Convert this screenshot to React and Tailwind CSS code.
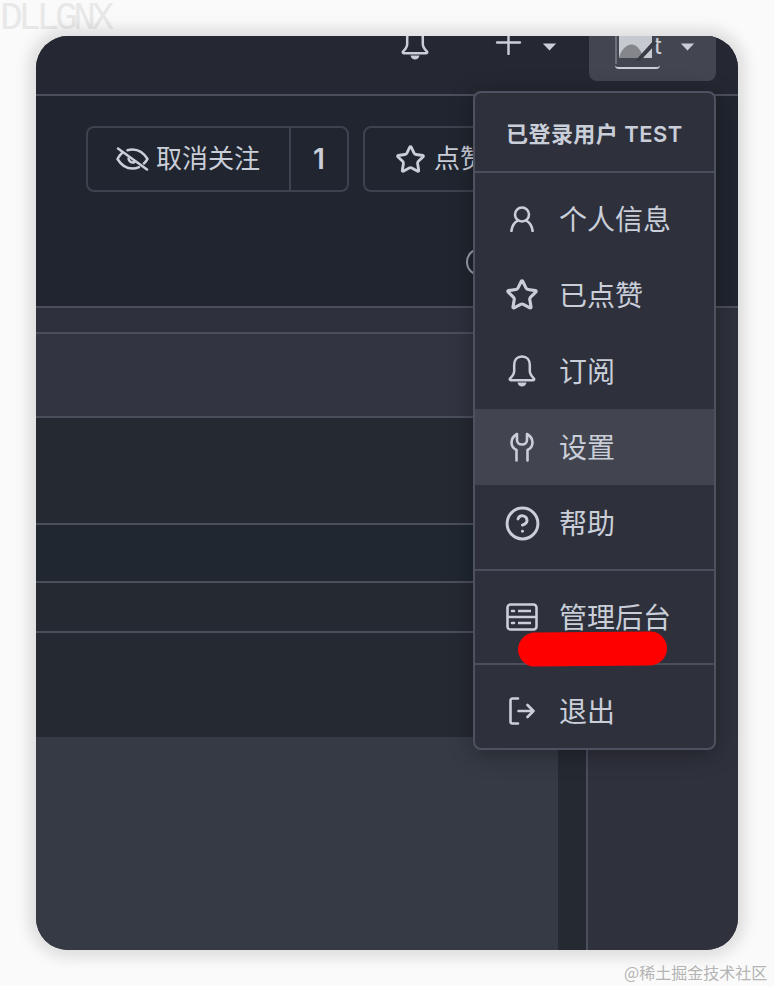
import React from "react";
import { Plus, Star, CircleHelp } from "lucide-react";

const Caret = ({ className }) => (
  <svg viewBox="0 0 16 9" className={className} fill="currentColor">
    <path d="M0.5 0.5h15L8 8.5z" />
  </svg>
);

const BellIcon = ({ className }) => (
  <svg viewBox="0 0 28 32" className={className} fill="none" stroke="currentColor" strokeWidth="2.5">
    <path
      d="M14 1.500C9 1.500 6.200 5 6.200 10v6c0 3-1.600 5-4 7.400-.8.8-.4 1.800.6 1.800h22.400c1 0 1.400-1 .6-1.800-2.400-2.400-4-4.400-4-7.400v-6c0-5-2.800-8.500-7.800-8.500z"
      strokeLinejoin="round"
    />
    <path d="M9.500 27.500h9c-.5 2.500-2.300 4-4.500 4s-4-1.500-4.500-4z" fill="currentColor" stroke="none" />
  </svg>
);

const UserIcon = ({ className }) => (
  <svg viewBox="0 0 24 26" className={className} fill="none" stroke="currentColor" strokeWidth="2.600" strokeLinecap="round">
    <circle cx="12" cy="8.500" r="7" />
    <path d="M1.400 25c.6-5 3-8.500 6.300-10.300M22.600 25c-.6-5-3-8.500-6.300-10.300" />
  </svg>
);

const WrenchIcon = ({ className }) => (
  <svg viewBox="0 0 24 30" className={className} fill="none" stroke="currentColor" strokeWidth="2.600" strokeLinecap="round" strokeLinejoin="round">
    <path d="M6.500 28.500V18C3.500 16.500 1.500 13.500 1.500 10.500c0-3.500 2-6.500 5.500-8.500v6c0 2.500 2 4.500 5 4.500s5-2 5-4.500V2c3.500 2 5.500 5 5.500 8.500 0 3-2 6-5 7.500v10.500" />
  </svg>
);

const ServerIcon = ({ className }) => (
  <svg viewBox="0 0 32 28" className={className} fill="none" stroke="currentColor" strokeWidth="2.600">
    <rect x="1.500" y="1.500" width="29" height="25" rx="3" />
    <path d="M1.500 14h29M12 8h13M12 20h13" />
    <path d="M6 8h2M6 20h2" strokeLinecap="round" />
  </svg>
);

const LogoutIcon = ({ className }) => (
  <svg viewBox="0 0 26 28" className={className} fill="none" stroke="currentColor" strokeWidth="2.600" strokeLinecap="round" strokeLinejoin="round">
    <path d="M9 1.500H3.500a2 2 0 0 0-2 2v21a2 2 0 0 0 2 2H9" />
    <path d="M9.500 14h15M18.500 8l6 6-6 6" />
  </svg>
);

const EyeSlash = ({ className }) => (
  <svg viewBox="0 0 33 24" className={className} fill="none" stroke="currentColor" strokeWidth="2.500" strokeLinecap="round" strokeLinejoin="round">
    <path d="M2 1.500l29 21" />
    <path d="M11.500 3.200C13 2.700 14.700 2.400 16.500 2.400c6.500 0 11.500 3.800 15 9.600-1 1.700-2.200 3.200-3.600 4.500" />
    <path d="M5.800 6.200C4 7.700 2.700 9.700 1.500 12c3.500 5.800 8.500 9.600 15 9.600 2.400 0 4.500-.5 6.500-1.400" />
    <path d="M12.500 11.500a4.200 4.200 0 0 0 6 3.500" />
  </svg>
);

const StarIcon = ({ className }) => <Star className={className} strokeWidth={2.2} />;
const HelpIcon = ({ className }) => <CircleHelp className={className} strokeWidth={1.9} />;

const Item = ({ icon: Icon, label, active, iconClass }) => (
  <div className={`h-[76px] flex items-center pl-[31px] ${active ? "bg-[#42454f]" : ""}`}>
    <span className="w-[32px] flex justify-center">
      <Icon className={iconClass} />
    </span>
    <span className="ml-[21px] mt-[1px] text-[28px] leading-none">{label}</span>
  </div>
);

const rows = [
  "h-[26px] bg-[#2e313d]",
  "h-[84px] bg-[#323541]",
  "h-[107px] bg-[#252932]",
  "h-[58px] bg-[#202730]",
  "h-[50px] bg-[#252932]",
];

export default function App() {
  return (
    <div className="relative h-[986px] w-[774px] overflow-hidden bg-[#fafafa] pl-[36px] pt-[36px] font-['Inter','Noto_Sans_CJK_SC',sans-serif] text-[#c9ced9] antialiased">
      <div className="absolute left-0 top-0 font-['Liberation_Mono',monospace] text-[38px] leading-[38px] tracking-[-4.5px] text-[#e8e8e8]">
        DLLGNX
      </div>

      <div className="relative flex h-[914px] w-[702px] flex-col rounded-[32px] shadow-[0_0_14px_8px_rgba(0,0,0,0.11)]">
        <div className="flex h-full flex-col overflow-hidden rounded-[32px] bg-[#252932]">
          {/* top nav */}
          <header className="flex h-[60px] shrink-0 border-b-2 border-[#4b4f5c] bg-[#252832]">
            <div className="flex flex-1 items-start justify-end">
              <BellIcon className="mr-[60px] mt-[-8px] h-[32px] w-[28px] shrink-0" />
              <Plus className="mr-[14px] mt-[-13px] h-[39px] w-[39px] shrink-0" strokeWidth={1.500} />
              <Caret className="mr-[32px] mt-[7px] h-[8px] w-[15px]" />
            </div>
            <div className="mr-[22px] flex h-[45px] w-[127px] items-start rounded-b-[8px] bg-[#434650] pl-[26px]">
              <div className="relative h-[33px] w-[45px] overflow-hidden rounded-b-[4px] border-b-2 border-[#c9ced9]">
                <svg viewBox="0 0 45 31" className="absolute inset-0 h-full w-full">
                  <path d="M1 0v28" stroke="#7d808a" strokeWidth="1.500" />
                  <rect x="4" y="0" width="33" height="22" fill="#c7c9d1" />
                  <path d="M4 22c2-9 9-15 15-13 4 1 7 6 10 13z" fill="#85868c" />
                  <path d="M20 25L39 4l3 3-17 18z" fill="#3a3c45" />
                </svg>
              </div>
              <span className="ml-[-6px] mt-[-2px] text-[24px] leading-none">t</span>
              <Caret className="ml-[18px] mt-[7px] h-[8px] w-[15px]" />
            </div>
          </header>

          {/* repo header */}
          <section className="h-[212px] shrink-0 border-b-2 border-[#4b4f5c] bg-[#20252f] pl-[50px] pt-[30px]">
            <div className="flex gap-[14px]">
              <div className="flex h-[66px] w-[263px] rounded-[8px] border-2 border-[#3e424e]">
                <div className="flex w-[203px] items-center border-r-2 border-[#3e424e] pl-[28px] text-[26px]">
                  <EyeSlash className="h-[24px] w-[33px]" />
                  <span className="ml-[7px] leading-none">取消关注</span>
                </div>
                <div className="flex flex-1 items-center justify-center text-[28px] font-semibold">1</div>
              </div>
              <div className="flex h-[66px] w-[200px] items-center rounded-[8px] border-2 border-[#3e424e] pl-[30px] text-[26px]">
                <Star className="h-[31px] w-[31px]" strokeWidth={2.2} />
                <span className="ml-[8px] leading-none">点赞</span>
              </div>
            </div>
            <div className="ml-[380px] mt-[56px] h-[28px] w-[28px] rounded-full border-2 border-[#9a9eaa]" />
          </section>

          {/* body */}
          <div className="flex min-h-0 flex-1">
            <div className="flex w-[522px] shrink-0 flex-col">
              {rows.map((row) => (
                <div key={row} className={`${row} border-b-2 border-[#4b4f5c]`} />
              ))}
              <div className="h-[104px] bg-[#252932]" />
              <div className="flex-1 bg-[#353a44]" />
            </div>
            <div className="w-[30px] shrink-0 border-r-2 border-[#4b4f5c] bg-[#252932]" />
            <div className="flex-1 bg-[#2f313c]" />
          </div>
        </div>

        {/* dropdown menu */}
        <div className="absolute left-[437px] top-[55px] h-[659px] w-[243px] rounded-[8px] border-2 border-[#4e5260] bg-[#2e313c] shadow-[0_4px_24px_rgba(0,0,0,0.3)]">
          <div className="flex h-[80px] items-center border-b-2 border-[#4b4f5c] pl-[31px] pt-[4px] text-[22px] font-semibold leading-none tracking-[0.45px]">
            已登录用户 TEST
          </div>
          <div className="border-b-2 border-[#4b4f5c] py-[8px]">
            <Item icon={UserIcon} label="个人信息" iconClass="h-[26px] w-[24px]" />
            <Item icon={StarIcon} label="已点赞" iconClass="h-[34px] w-[34px] shrink-0" />
            <Item icon={BellIcon} label="订阅" iconClass="h-[32px] w-[28px]" />
            <Item icon={WrenchIcon} label="设置" active iconClass="h-[30px] w-[24px]" />
            <Item icon={HelpIcon} label="帮助" iconClass="h-[37px] w-[37px] shrink-0" />
          </div>
          <div className="relative border-b-2 border-[#4b4f5c] py-[8px]">
            <Item icon={ServerIcon} label="管理后台" iconClass="h-[28px] w-[32px]" />
            <div className="absolute left-[43px] top-[61px] h-[34px] w-[149px] rotate-[-0.6deg] rounded-full bg-[#ff0000]" />
          </div>
          <div className="h-[73px] pt-[8px]">
            <Item icon={LogoutIcon} label="退出" iconClass="h-[28px] w-[26px]" />
          </div>
        </div>
      </div>

      <div className="absolute left-[624px] top-[962px] font-['Noto_Sans_CJK_SC',serif] text-[16px] leading-[20px] text-[#b4b4b4]">
        @稀土掘金技术社区
      </div>
    </div>
  );
}
